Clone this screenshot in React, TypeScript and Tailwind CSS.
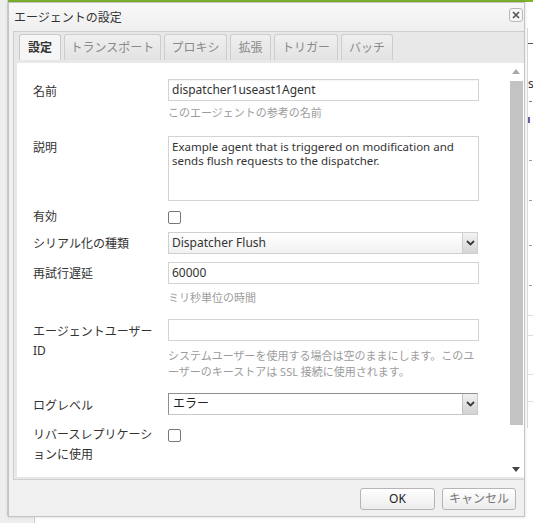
import React from "react";

const Chevron = () => (
  <svg width="9" height="6" viewBox="0 0 9 6">
    <path d="M1 1 L4.5 4.5 L8 1" stroke="#3a3a3a" strokeWidth="1.8" fill="none" />
  </svg>
);

const Label = ({ children, pt }: { children: React.ReactNode; pt: string }) => (
  <div className={`w-[135px] shrink-0 whitespace-nowrap text-[12px] leading-[19px] text-[#333] ${pt}`}>{children}</div>
);

export default function App() {
  const tabs = [
    { t: "設定", w: "w-[42px]", active: true },
    { t: "トランスポート", w: "w-[97px]" },
    { t: "プロキシ", w: "w-[63px]" },
    { t: "拡張", w: "w-[41px]" },
    { t: "トリガー", w: "w-[64px]" },
    { t: "バッチ", w: "w-[52px]" },
  ];
  return (
    <div className="relative w-[533px] h-[523px] overflow-hidden bg-white font-['Noto_Sans','Noto_Sans_CJK_JP',sans-serif]">
      {/* page background */}
      <div className="absolute left-0 top-0 w-[8px] h-full bg-[#eeeeee] border-r border-[#d4d4d4]" />
      <div className="absolute left-0 top-[516px] w-[35px] h-[7px] bg-[#eeeeee] border-r border-[#cfcfcf]" />
      <div className="absolute left-[8px] top-0 w-[525px] h-[2px] bg-[#7db32f]" />
      <div className="absolute left-[527px] top-[28px] w-px h-[400px] bg-[#d9d9d9]" />
      <div className="absolute left-[528px] top-[43px] w-[5px] h-px bg-[#555]" />
      <div className="absolute left-[528px] top-[76px] text-[12px] leading-[16px] text-[#333]">s</div>
      <div className="absolute left-[529px] top-[101px] w-[3px] h-px bg-[#777]" />
      <div className="absolute left-[528px] top-[117px] w-[2px] h-[6px] bg-[#6b5aa8]" />
      <div className="absolute left-[529px] top-[160px] w-[3px] h-px bg-[#999]" />
      <div className="absolute left-[529px] top-[200px] w-[3px] h-px bg-[#999]" />
      <div className="absolute left-[529px] top-[245px] w-[3px] h-px bg-[#999]" />
      <div className="absolute left-[529px] top-[285px] w-[3px] h-px bg-[#999]" />
      <div className="absolute left-[528px] top-[315px] w-[5px] h-px bg-[#dcdcdc]" />
      <div className="absolute left-[528px] top-[335px] w-[5px] h-px bg-[#dcdcdc]" />
      <div className="absolute left-[528px] top-[374px] w-[5px] h-px bg-[#dcdcdc]" />
      <div className="absolute left-[528px] top-[401px] w-[5px] h-px bg-[#dcdcdc]" />

      {/* dialog */}
      <div className="absolute left-[8px] top-[2px] w-[517px] h-[515px] flex flex-col border border-[#c4c4c4] bg-[#f0f0f0] shadow-[0_0_3px_rgba(0,0,0,0.15)]">
        {/* title bar */}
        <div className="h-[28px] flex justify-between bg-gradient-to-b from-[#f8f8f8] to-[#efefef] pl-[5px] pr-px">
          <div className="pt-[5px] text-[12px] leading-[19px] text-[#333]">エージェントの設定</div>
          <div className="mt-[5px] w-[14px] h-[14px] rounded-[3px] border border-[#b9b9b9] bg-[#f6f6f6] flex items-center justify-center">
            <svg width="8" height="8" viewBox="0 0 8 8">
              <path d="M1 1 L7 7 M7 1 L1 7" stroke="#555" strokeWidth="1.7" />
            </svg>
          </div>
        </div>

        {/* tab container */}
        <div className="ml-[4px] h-[449px] flex flex-col border-l border-t border-b border-[#cfcfcf] bg-[#e8e8e8] pl-[3px] pb-[2px]">
          <div className="h-[31px] shrink-0 flex items-start gap-[3px] pt-[2px] pl-[2px]">
            {tabs.map((tab) => (
              <div
                key={tab.t}
                className={`${tab.w} h-[26px] flex items-center justify-center rounded-t-[3px] border border-b-0 text-[12px] whitespace-nowrap ${
                  tab.active
                    ? "bg-[#f6f6f6] border-[#c9c9c9] text-[#333] font-bold"
                    : "bg-gradient-to-b from-[#efefef] to-[#e3e3e3] border-[#cdcdcd] text-[#8a8a8a]"
                }`}
              >
                {tab.t}
              </div>
            ))}
          </div>

          <div className="flex-1 flex bg-white">
            {/* form */}
            <div className="flex-1 pl-[16px] pt-[16px] text-[#333]">
              {/* 名前 */}
              <div className="flex">
                <Label pt="pt-[3px]">名前</Label>
                <div>
                  <div className="w-[311px] h-[22px] border border-[#d3d3d3] bg-white pl-[3px] text-[12px] leading-[20px] text-[#333] shadow-[inset_0_1px_1px_rgba(0,0,0,0.04)]">
                    dispatcher1useast1Agent
                  </div>
                  <div className="mt-[4px] text-[11px] leading-[16px] text-[#9c9c9c] whitespace-nowrap">このエージェントの参考の名前</div>
                </div>
              </div>

              {/* 説明 */}
              <div className="flex mt-[15px]">
                <Label pt="pt-[2px]">説明</Label>
                <div className="w-[311px] h-[65px] border border-[#d3d3d3] bg-white pl-[3px] pt-[3px] text-[11.5px] leading-[14px] text-[#333]">
                  Example agent that is triggered on modification and
                  <br />
                  sends flush requests to the dispatcher.
                </div>
              </div>

              {/* 有効 */}
              <div className="flex mt-[6px]">
                <Label pt="pt-0">有効</Label>
                <div className="mt-[4px] w-[13px] h-[13px] rounded-[2px] border border-[#777] bg-white" />
              </div>

              {/* シリアル化の種類 */}
              <div className="flex mt-[6px]">
                <Label pt="pt-[2px]">シリアル化の種類</Label>
                <div className="flex w-[310px] h-[22px] border border-[#cfcfcf] bg-gradient-to-b from-white to-[#f1f1f1]">
                  <div className="flex-1 pl-[3px] text-[12px] leading-[20px] text-[#333]">Dispatcher Flush</div>
                  <div className="w-[15px] h-full border-l border-[#cfcfcf] bg-gradient-to-b from-[#f3f3f3] to-[#d5d5d5] flex items-center justify-center">
                    <Chevron />
                  </div>
                </div>
              </div>

              {/* 再試行遅延 */}
              <div className="flex mt-[8px]">
                <Label pt="pt-[2px]">再試行遅延</Label>
                <div>
                  <div className="w-[311px] h-[22px] border border-[#d3d3d3] bg-white pl-[3px] text-[12px] leading-[20px] text-[#333]">60000</div>
                  <div className="mt-[6px] text-[11px] leading-[16px] text-[#9c9c9c] whitespace-nowrap">ミリ秒単位の時間</div>
                </div>
              </div>

              {/* エージェントユーザーID */}
              <div className="flex mt-[13px]">
                <Label pt="pt-[3px]">
                  エージェントユーザー
                  <br />
                  ID
                </Label>
                <div>
                  <div className="w-[311px] h-[22px] border border-[#d3d3d3] bg-white" />
                  <div className="mt-[7px] text-[11px] leading-[16px] text-[#9c9c9c] whitespace-nowrap">
                    システムユーザーを使用する場合は空のままにします。このユ
                    <br />
                    ーザーのキーストアは SSL 接続に使用されます。
                  </div>
                </div>
              </div>

              {/* ログレベル */}
              <div className="flex mt-[13px]">
                <Label pt="pt-[3px]">ログレベル</Label>
                <div className="flex w-[310px] h-[22px] border border-t-[#8f8f8f] border-l-[#8f8f8f] border-r-[#c8c8c8] border-b-[#c8c8c8] bg-white">
                  <div className="flex-1 pl-[4px] text-[12px] leading-[20px] text-[#222]">エラー</div>
                  <div className="w-[15px] h-full border-l border-[#c2c2c2] bg-gradient-to-b from-[#f0f0f0] to-[#d2d2d2] flex items-center justify-center">
                    <Chevron />
                  </div>
                </div>
              </div>

              {/* リバースレプリケーション */}
              <div className="flex mt-[10px]">
                <div className="w-[135px] shrink-0 whitespace-nowrap text-[12px] leading-[20px] text-[#333]">
                  リバースレプリケーシ
                  <br />
                  ョンに使用
                </div>
                <div className="mt-[4px] w-[13px] h-[13px] rounded-[2px] border border-[#777] bg-white" />
              </div>
            </div>

            {/* scrollbar */}
            <div className="w-[16px] shrink-0 flex flex-col bg-white">
              <div className="h-[16px] flex items-center justify-center">
                <svg width="8" height="5" viewBox="0 0 8 5">
                  <path d="M0 5 L4 0 L8 5 Z" fill="#a8a8a8" />
                </svg>
              </div>
              <div className="mt-[2px] ml-[2px] w-[13px] h-[344px] bg-[#c3c3c3]" />
              <div className="flex-1" />
              <div className="h-[16px] flex items-center justify-center">
                <svg width="8" height="5" viewBox="0 0 8 5">
                  <path d="M0 0 L8 0 L4 5 Z" fill="#444" />
                </svg>
              </div>
            </div>
          </div>
        </div>

        {/* footer */}
        <div className="flex-1 flex justify-end items-start gap-[7px] pt-[8px] pr-[8px]">
          <div className="w-[75px] h-[22px] rounded-[3px] border border-[#b5b5b5] bg-gradient-to-b from-white to-[#ececec] flex items-center justify-center text-[12px] text-[#222]">
            OK
          </div>
          <div className="w-[74px] h-[22px] rounded-[3px] border border-[#b5b5b5] bg-gradient-to-b from-white to-[#ececec] flex items-center justify-center text-[12px] text-[#777]">
            キャンセル
          </div>
        </div>
      </div>
    </div>
  );
}
